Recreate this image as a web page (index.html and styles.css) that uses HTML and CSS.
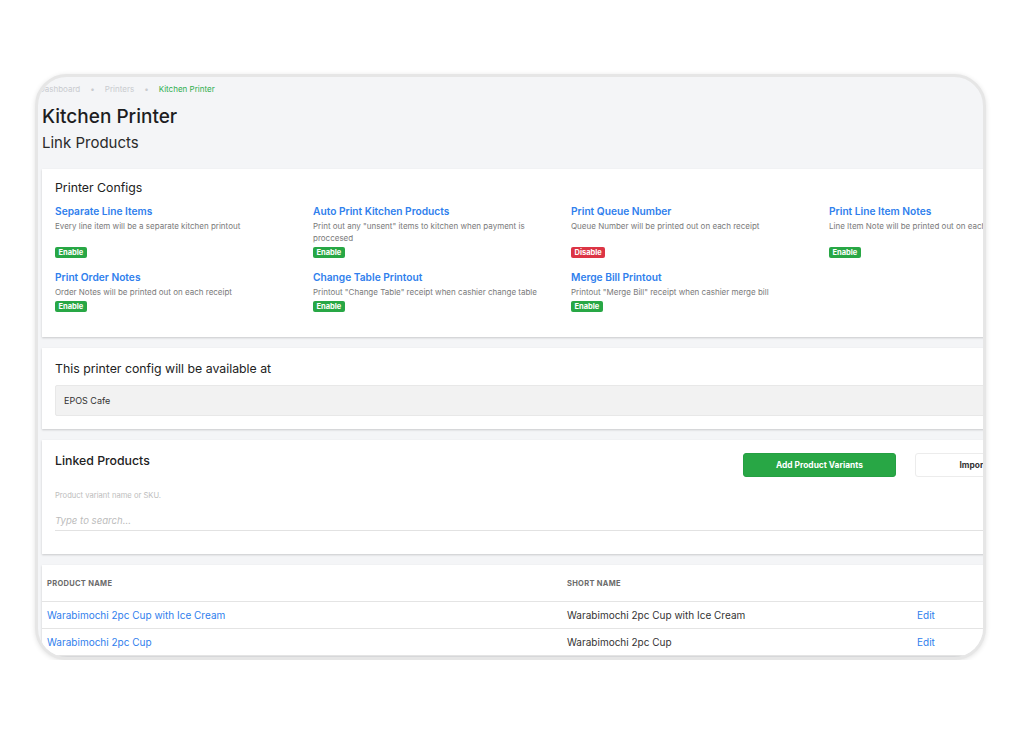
FILE: index.html
```html
<!DOCTYPE html>
<html lang="en">
<head>
    <meta charset="UTF-8">
    <meta name="viewport" content="width=device-width, initial-scale=1.0">
    <title>Kitchen Printer</title>
    <link rel="stylesheet" href="styles.css">
</head>
<body>
    <div class="device">
        <div class="screen">
            <div class="breadcrumb">
                <span>Dashboard</span>
                <span class="dot">•</span>
                <span>Printers</span>
                <span class="dot">•</span>
                <span class="current">Kitchen Printer</span>
            </div>
            <h1>Kitchen Printer</h1>
            <h2>Link Products</h2>

            <div class="card configs-card">
                <h3>Printer Configs</h3>
                <div class="config-grid">
                    <div class="config">
                        <div class="config-title">Separate Line Items</div>
                        <div class="config-desc">Every line item will be a separate kitchen printout</div>
                        <span class="badge on">Enable</span>
                    </div>
                    <div class="config">
                        <div class="config-title">Auto Print Kitchen Products</div>
                        <div class="config-desc">Print out any "unsent" items to kitchen when payment is proccesed</div>
                        <span class="badge on">Enable</span>
                    </div>
                    <div class="config">
                        <div class="config-title">Print Queue Number</div>
                        <div class="config-desc">Queue Number will be printed out on each receipt</div>
                        <span class="badge off">Disable</span>
                    </div>
                    <div class="config">
                        <div class="config-title">Print Line Item Notes</div>
                        <div class="config-desc">Line Item Note will be printed out on each receipt</div>
                        <span class="badge on">Enable</span>
                    </div>
                    <div class="config">
                        <div class="config-title">Print Order Notes</div>
                        <div class="config-desc">Order Notes will be printed out on each receipt</div>
                        <span class="badge on">Enable</span>
                    </div>
                    <div class="config">
                        <div class="config-title">Change Table Printout</div>
                        <div class="config-desc">Printout "Change Table" receipt when cashier change table</div>
                        <span class="badge on">Enable</span>
                    </div>
                    <div class="config">
                        <div class="config-title">Merge Bill Printout</div>
                        <div class="config-desc">Printout "Merge Bill" receipt when cashier merge bill</div>
                        <span class="badge on">Enable</span>
                    </div>
                </div>
            </div>

            <div class="card outlet-card">
                <h3>This printer config will be available at</h3>
                <div class="outlet">EPOS Cafe</div>
            </div>

            <div class="card linked-card">
                <div class="card-head">
                    <h3 class="medium">Linked Products</h3>
                    <div class="actions">
                        <button class="btn btn-green">Add Product Variants</button>
                        <button class="btn btn-white">Import</button>
                    </div>
                </div>
                <label class="search-label">Product variant name or SKU.</label>
                <input class="search" type="text" placeholder="Type to search...">
            </div>

            <div class="card table-card">
                <table>
                    <thead>
                        <tr>
                            <th class="col-name">Product Name</th>
                            <th class="col-short">Short Name</th>
                            <th></th>
                        </tr>
                    </thead>
                    <tbody>
                        <tr>
                            <td><a href="#">Warabimochi 2pc Cup with Ice Cream</a></td>
                            <td>Warabimochi 2pc Cup with Ice Cream</td>
                            <td><a href="#">Edit</a></td>
                        </tr>
                        <tr>
                            <td><a href="#">Warabimochi 2pc Cup</a></td>
                            <td>Warabimochi 2pc Cup</td>
                            <td><a href="#">Edit</a></td>
                        </tr>
                    </tbody>
                </table>
            </div>
        </div>
    </div>
</body>
</html>
```

FILE: styles.css
```css
body {
    margin: 0;
    background: #fff;
    font-family: 'Inter', 'Liberation Sans', sans-serif;
    color: #222;
}

.device {
    box-sizing: border-box;
    width: 951px;
    height: 586px;
    margin: 74px 0 0 35px;
    border: 3px solid #e6e6e6;
    border-radius: 32px;
    box-shadow: 0 1px 5px rgba(0, 0, 0, 0.12);
    overflow: hidden;
    background: #f4f5f7;
}

.screen {
    width: 1002px;
    padding: 7px 0 0 4px;
}

.breadcrumb {
    font-size: 8px;
    line-height: 10px;
    color: #c9cbcf;
    display: flex;
    gap: 10px;
    margin-left: -3px;
}

.breadcrumb .current {
    color: #2fae4e;
}

h1 {
    margin: 10px 0 0;
    font-size: 19px;
    line-height: 26px;
    font-weight: 500;
    color: #1d1d1f;
}

h2 {
    margin: 3px 0 16px;
    font-size: 15px;
    line-height: 20px;
    font-weight: 400;
    color: #2a2a2a;
}

.card {
    background: #fff;
    margin-bottom: 11px;
    box-shadow: 0 1px 2px rgba(0, 0, 0, 0.18);
}

h3 {
    margin: 0;
    font-size: 12.3px;
    line-height: 16px;
    font-weight: 400;
    color: #222;
}

h3.medium {
    font-weight: 500;
}

/* printer configs */
.configs-card {
    padding: 11px 13px 25px;
}

.config-grid {
    display: grid;
    grid-template-columns: repeat(4, 239px);
    column-gap: 19px;
    row-gap: 13px;
    margin-top: 9px;
}

.config {
    display: flex;
    flex-direction: column;
    align-items: flex-start;
}

.config-title {
    font-size: 10.2px;
    line-height: 13px;
    font-weight: 600;
    color: #2f80ed;
}

.config-desc {
    margin: 2px 0 3px;
    font-size: 8px;
    line-height: 12px;
    color: #7a7a7a;
}

.badge {
    margin-top: auto;
    font-size: 7.5px;
    line-height: 11px;
    font-weight: 700;
    color: #fff;
    padding: 0 3.5px;
    border-radius: 2px;
}

.badge.on {
    background: #28a745;
}

.badge.off {
    background: #dc3545;
}

/* outlet */
.outlet-card {
    padding: 13px;
}

.outlet {
    margin-top: 8px;
    height: 31px;
    box-sizing: border-box;
    padding: 0 8px;
    display: flex;
    align-items: center;
    background: #f2f2f2;
    border: 1px solid #e8e8e8;
    border-radius: 2px;
    font-size: 9px;
    color: #333;
}

/* linked products */
.linked-card {
    padding: 13px 13px 23px;
}

.card-head {
    display: flex;
    justify-content: space-between;
    align-items: flex-start;
}

.actions {
    display: flex;
    gap: 19px;
}

.btn {
    height: 24px;
    border-radius: 3px;
    font-family: inherit;
    font-size: 8.4px;
    font-weight: 700;
    cursor: pointer;
}

.btn-green {
    width: 153px;
    background: #28a745;
    border: 1px solid #25a043;
    color: #fff;
}

.btn-white {
    width: 116px;
    background: #fff;
    border: 1px solid #ececec;
    color: #333;
}

.search-label {
    display: block;
    margin-top: 14px;
    font-size: 7.6px;
    line-height: 10px;
    color: #bdbdbd;
}

.search {
    display: block;
    width: 100%;
    box-sizing: border-box;
    margin-top: 10px;
    height: 20px;
    padding: 0;
    border: none;
    border-bottom: 1px solid #e2e2e2;
    font-family: inherit;
    font-size: 9.6px;
    font-style: italic;
    outline: none;
}

.search::placeholder {
    color: #bcbcbc;
}

/* table */
.table-card {
    padding: 0;
}

table {
    width: 100%;
    border-collapse: collapse;
}

th {
    height: 36px;
    padding: 0 5px;
    text-align: left;
    font-size: 7.5px;
    font-weight: 700;
    letter-spacing: 0.3px;
    text-transform: uppercase;
    color: #6b6b6b;
    border-bottom: 1px solid #e4e4e4;
}

.col-name {
    width: 510px;
}

.col-short {
    width: 340px;
}

td {
    height: 26px;
    padding: 0 5px;
    font-size: 10px;
    color: #333;
    border-bottom: 1px solid #e4e4e4;
}

td a {
    color: #2f80ed;
    text-decoration: none;
}
```
